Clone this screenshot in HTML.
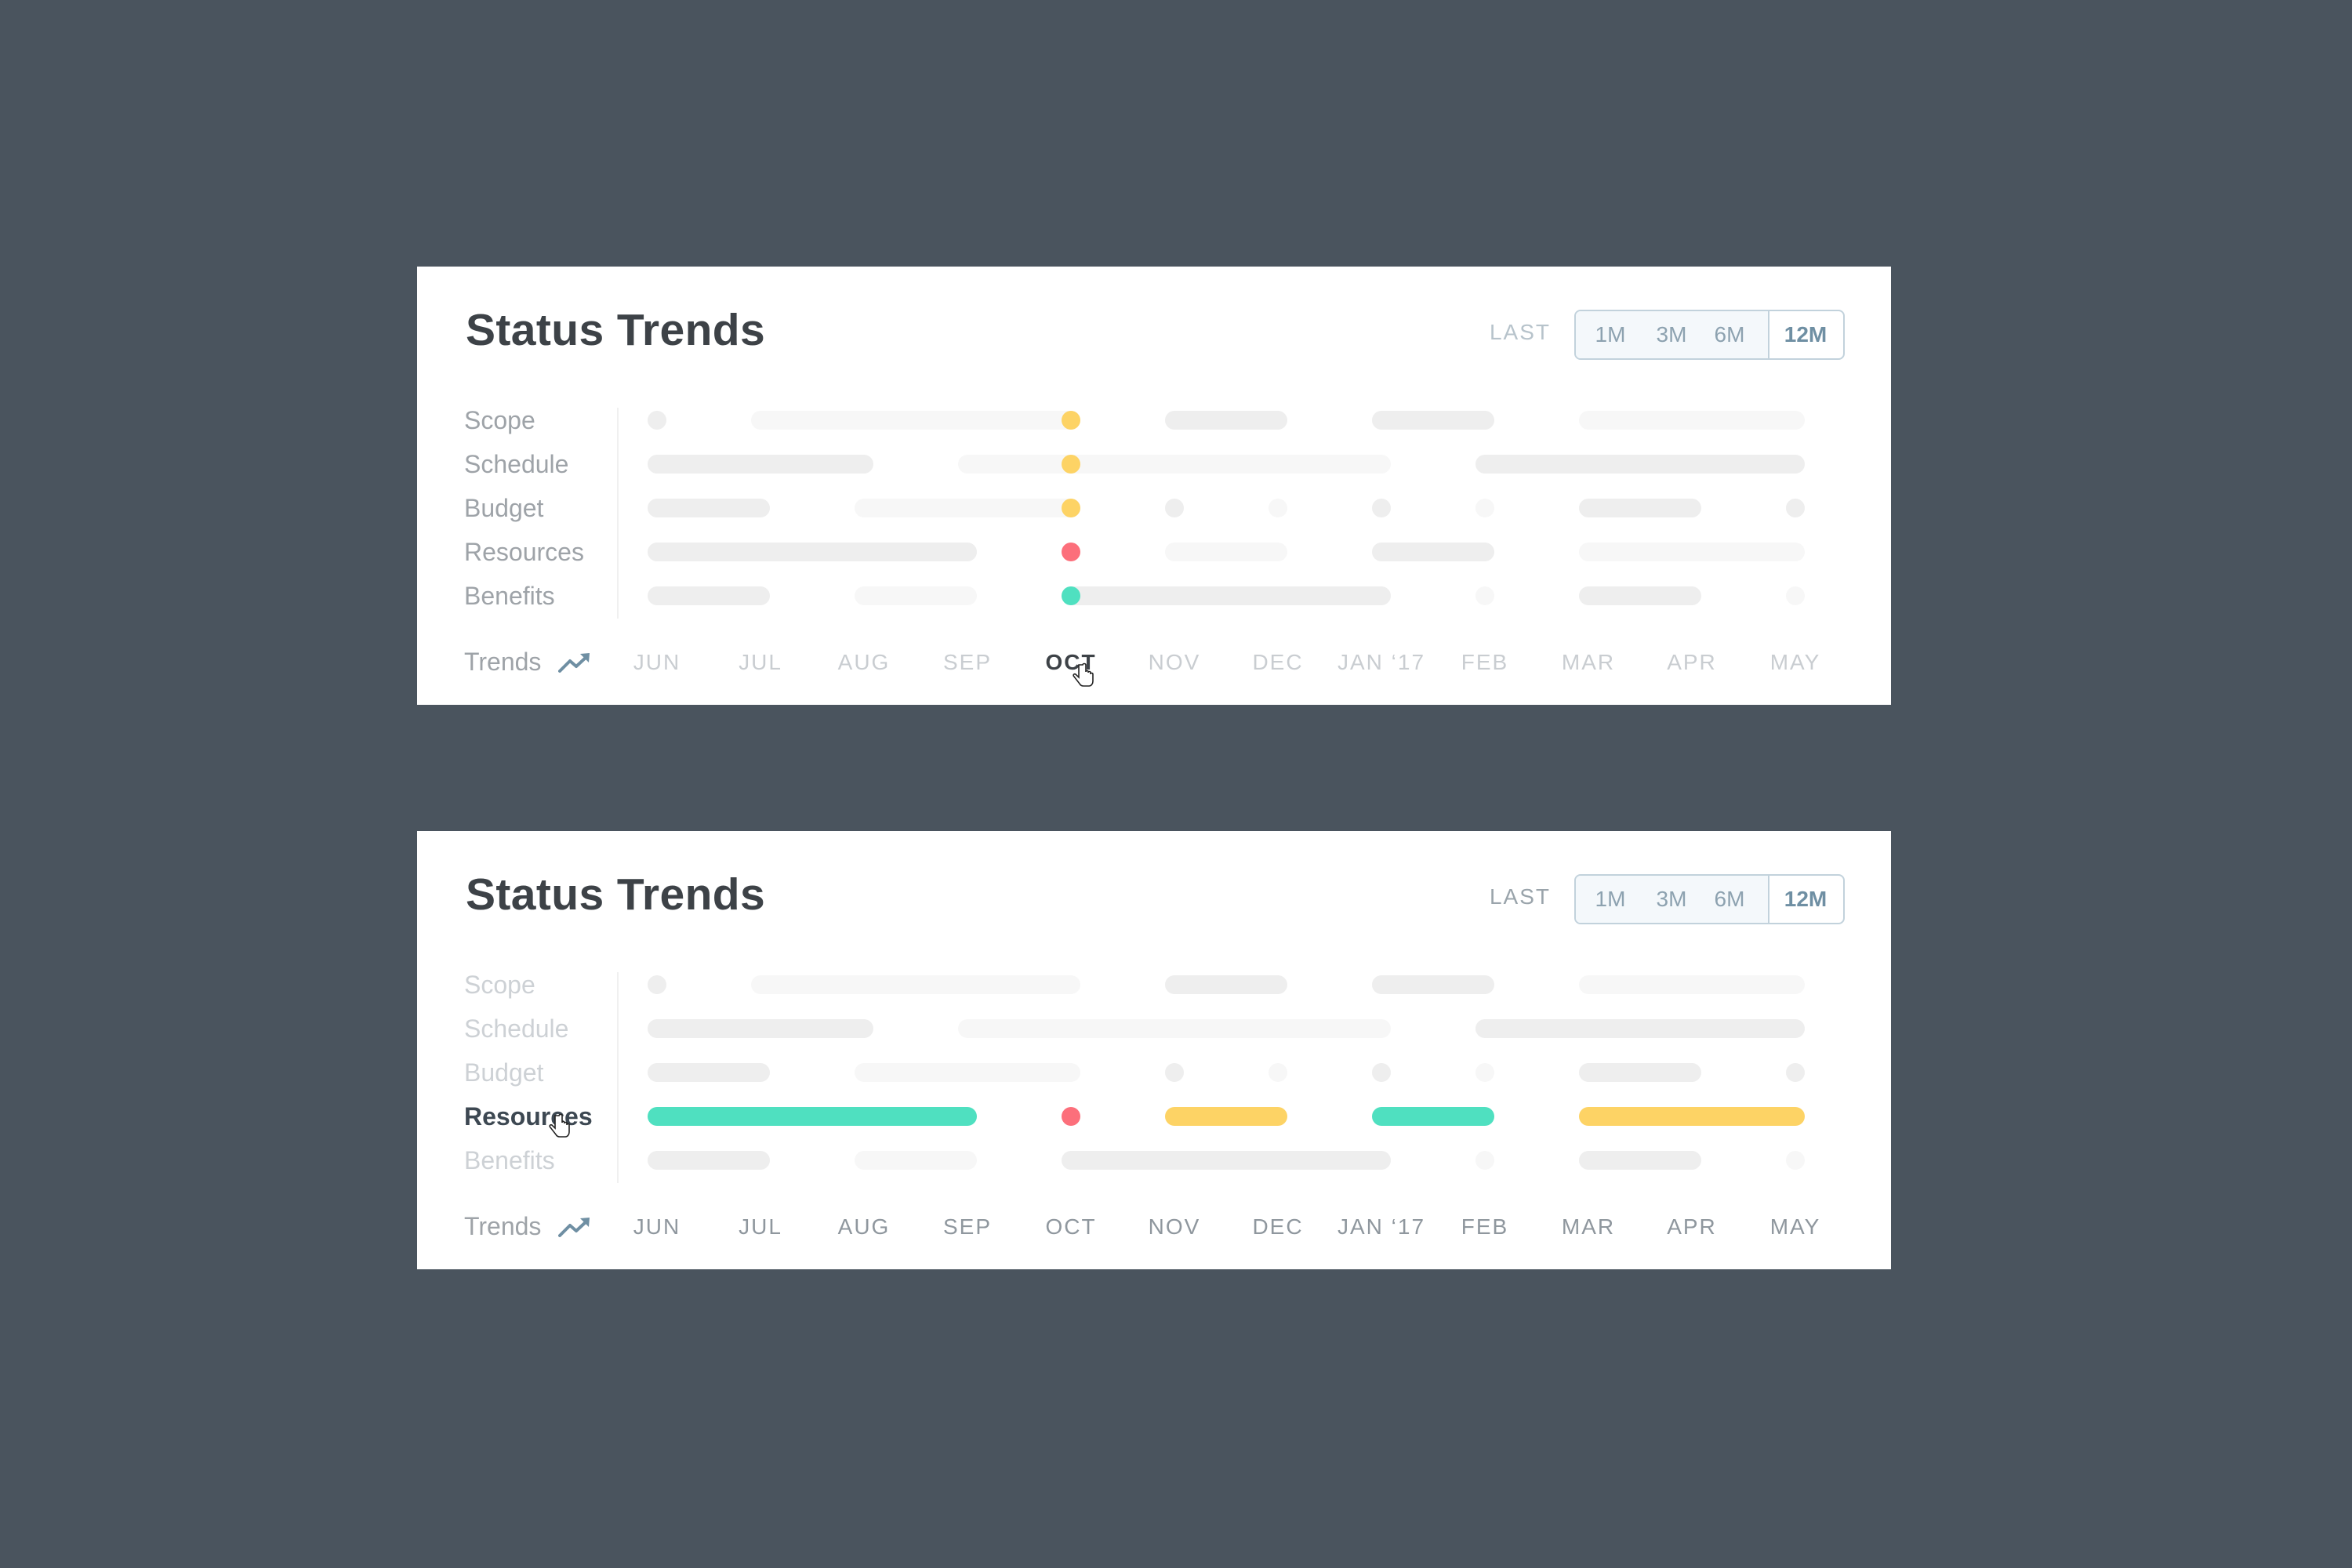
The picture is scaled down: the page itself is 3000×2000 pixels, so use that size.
<!DOCTYPE html>
<html><head><meta charset="utf-8"><style>
html,body{margin:0;padding:0}
body{width:3000px;height:2000px;background:#4a545e;position:relative;overflow:hidden;font-family:"Liberation Sans",sans-serif}
.card{position:absolute;left:532px;width:1880px;height:559px;background:#fff}
.title{position:absolute;left:62px;top:53px;font-size:57px;line-height:57px;font-weight:bold;color:#3d4247;letter-spacing:0.4px}
.last{position:absolute;right:434px;top:70px;width:100px;text-align:right;font-size:28px;line-height:28px;color:#b7c3cb;letter-spacing:2px}
.grp{position:absolute;left:1476px;top:55px;width:341px;height:60px;border:2px solid #c2d2dc;border-radius:8px;overflow:hidden;background:#fff}
.grp .l{position:absolute;left:0;top:0;width:245px;height:60px;background:#f4f8fb;border-right:2px solid #c2d2dc}
.grp span{position:absolute;top:16px;font-size:28px;line-height:28px;color:#8da2b0;transform:translateX(-50%)}
.lab{position:absolute;left:60px;font-size:32px;line-height:32px;color:#9ea3a8}
.div{position:absolute;left:255px;top:180px;width:2px;height:269px;background:#f0f0f0}
.m{position:absolute;top:491px;width:140px;margin-left:-70px;text-align:center;font-size:28px;line-height:28px;letter-spacing:2px;color:#c9cdd1}
.b{position:absolute;height:24px;border-radius:12px}
</style></head><body>

<div class="card" id="c1" style="top:340px">
<div class="title">Status Trends</div>
<div class="last" style="right:auto;left:1346px">LAST</div>
<div class="grp"><div class="l"></div><span style="left:44px">1M</span><span style="left:122px">3M</span><span style="left:196px">6M</span><span style="left:293px;font-weight:bold;color:#6f8fa3">12M</span></div>
<div class="lab" style="top:180px">Scope</div>
<div class="lab" style="top:236px">Schedule</div>
<div class="lab" style="top:292px">Budget</div>
<div class="lab" style="top:348px">Resources</div>
<div class="lab" style="top:404px">Benefits</div>
<div class="div"></div>
<div class="lab" style="top:488px">Trends</div>
<svg style="position:absolute;left:180px;top:493px" width="42" height="26" viewBox="0 0 42 26"><polyline points="2,23 15,10 23,17 37,4" fill="none" stroke="#6f8fa3" stroke-width="4" stroke-linejoin="round" stroke-linecap="round"/><polygon points="28,1 40,0 39,12" fill="#6f8fa3"/></svg>
<div class="m" style="left:306px">JUN</div><div class="m" style="left:438px">JUL</div><div class="m" style="left:570px">AUG</div><div class="m" style="left:702px">SEP</div><div class="m" style="left:834px;font-weight:bold;color:#3d4247">OCT</div><div class="m" style="left:966px">NOV</div><div class="m" style="left:1098px">DEC</div><div class="m" style="left:1230px">JAN ‘17</div><div class="m" style="left:1362px">FEB</div><div class="m" style="left:1494px">MAR</div><div class="m" style="left:1626px">APR</div><div class="m" style="left:1758px">MAY</div>
<svg style="position:absolute;left:836px;top:505px" width="30" height="36" viewBox="0 0 30 36"><path d="M8 3v16l-4-4c-2-1-4 1-2 3l7 9c1 2 3 3 5 3h7c3 0 5-3 5-6v-9c0-2-3-2-3 0v-2c0-2-3-2-3 0v-1c0-2-3-2-3 0V3c0-2-4-2-4 0z" fill="#fff" stroke="#222" stroke-width="1.6"/></svg>
</div>

<div class="card" id="c2" style="top:1060px">
<div class="title">Status Trends</div>
<div class="last" style="right:auto;left:1346px;color:#9aa4ab">LAST</div>
<div class="grp"><div class="l"></div><span style="left:44px">1M</span><span style="left:122px">3M</span><span style="left:196px">6M</span><span style="left:293px;font-weight:bold;color:#6f8fa3">12M</span></div>
<div class="lab" style="top:180px;color:#cdd1d5">Scope</div>
<div class="lab" style="top:236px;color:#cdd1d5">Schedule</div>
<div class="lab" style="top:292px;color:#cdd1d5">Budget</div>
<div class="lab" style="top:348px;color:#3d4852;font-weight:bold">Resources</div>
<div class="lab" style="top:404px;color:#cdd1d5">Benefits</div>
<div class="div"></div>
<div class="lab" style="top:488px">Trends</div>
<svg style="position:absolute;left:180px;top:493px" width="42" height="26" viewBox="0 0 42 26"><polyline points="2,23 15,10 23,17 37,4" fill="none" stroke="#6f8fa3" stroke-width="4" stroke-linejoin="round" stroke-linecap="round"/><polygon points="28,1 40,0 39,12" fill="#6f8fa3"/></svg>
<div class="m" style="left:306px;color:#8f979e">JUN</div><div class="m" style="left:438px;color:#8f979e">JUL</div><div class="m" style="left:570px;color:#8f979e">AUG</div><div class="m" style="left:702px;color:#8f979e">SEP</div><div class="m" style="left:834px;color:#8f979e">OCT</div><div class="m" style="left:966px;color:#8f979e">NOV</div><div class="m" style="left:1098px;color:#8f979e">DEC</div><div class="m" style="left:1230px;color:#8f979e">JAN ‘17</div><div class="m" style="left:1362px;color:#8f979e">FEB</div><div class="m" style="left:1494px;color:#8f979e">MAR</div><div class="m" style="left:1626px;color:#8f979e">APR</div><div class="m" style="left:1758px;color:#8f979e">MAY</div>
<svg style="position:absolute;left:168px;top:360px" width="30" height="36" viewBox="0 0 30 36"><path d="M8 3v16l-4-4c-2-1-4 1-2 3l7 9c1 2 3 3 5 3h7c3 0 5-3 5-6v-9c0-2-3-2-3 0v-2c0-2-3-2-3 0v-1c0-2-3-2-3 0V3c0-2-4-2-4 0z" fill="#fff" stroke="#222" stroke-width="1.6"/></svg>
</div>

<script>
var G='#eeeeee',L='#f7f7f7',Y='#fdd365',R='#fc6f7b',E='#4fe0c0';
function rows(extra){
 return [
  [[0,0,G],[1,4,L],[5,6,G],[7,8,G],[9,11,L]],
  [[0,2,G],[3,7,L],[8,11,G]],
  [[0,1,G],[2,4,L],[5,5,G],[6,6,L],[7,7,G],[8,8,L],[9,10,G],[11,11,G]],
  extra,
  [[0,1,G],[2,3,L],[4,7,G],[8,8,L],[9,10,G],[11,11,L]]
 ];
}
function draw(id,data,dots){
 var c=document.getElementById(id);
 data.forEach(function(r,ri){
  r.forEach(function(s){
   var d=document.createElement('div');d.className='b';
   var a=306+132*s[0],b=306+132*s[1];
   d.style.left=(a-12)+'px';d.style.width=(b-a+24)+'px';
   d.style.top=(196+56*ri-12)+'px';d.style.background=s[2];
   c.appendChild(d);
  });
 });
 dots.forEach(function(s){
  var d=document.createElement('div');d.className='b';
  d.style.left=(306+132*s[0]-12)+'px';d.style.width='24px';
  d.style.top=(196+56*s[1]-12)+'px';d.style.background=s[2];c.appendChild(d);
 });
}
draw('c1',rows([[0,3,G],[5,6,L],[7,8,G],[9,11,L]]),[[4,0,Y],[4,1,Y],[4,2,Y],[4,3,R],[4,4,E]]);
draw('c2',rows([[0,3,E],[4,4,R],[5,6,Y],[7,8,E],[9,11,Y]]),[]);
</script>
</body></html>
